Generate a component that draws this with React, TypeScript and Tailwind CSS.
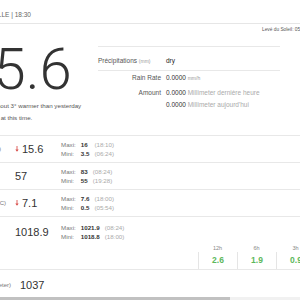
import type { ReactNode } from "react";

const sans = "font-['Liberation_Sans',Arial,sans-serif]";

function DownArrow() {
  return (
    <svg width="4" height="6" viewBox="0 0 4 6" className="shrink-0">
      <path d="M2 0 V5" stroke="#d9534f" strokeWidth="0.9" />
      <path d="M0.3 3.4 L2 5.8 L3.7 3.4 Z" fill="#d9534f" />
    </svg>
  );
}

interface MinMax {
  max: string;
  maxAt: string;
  min: string;
  minAt: string;
}

function MaxMini({ data }: { data: MinMax }) {
  return (
    <div className="grid w-max grid-cols-[auto_auto_auto] gap-x-[5px] text-[6.2px] leading-[9px]">
      <span className="text-[#777]">Maxi:</span>
      <span className="font-bold text-[#333]">{data.max}</span>
      <span className="text-[#aaa]">({data.maxAt})</span>
      <span className="text-[#777]">Mini:</span>
      <span className="font-bold text-[#333]">{data.min}</span>
      <span className="text-[#aaa]">({data.minAt})</span>
    </div>
  );
}

function Row({
  label,
  value,
  down,
  minmax,
  extra,
  tall,
}: {
  label: string;
  value: string;
  down?: boolean;
  minmax?: MinMax;
  extra?: ReactNode;
  tall?: boolean;
}) {
  return (
    <div
      className={`flex border-b border-[#e8e8e8] ${tall ? "h-[53px] items-start" : "h-[27px] items-center"}`}
    >
      <div className={`flex shrink-0 items-center ${tall ? "h-[30px]" : ""}`}>
        <div className="-ml-[45px] w-[61px] shrink-0 whitespace-nowrap text-[6px] text-[#777]">
          {label}
        </div>
        <div className="flex w-[46px] shrink-0 items-center gap-[3px] -ml-[1px]">
          {down && <DownArrow />}
          <span className="text-[11px] leading-none text-[#333]">{value}</span>
        </div>
        <div className="w-[137px] shrink-0">{minmax && <MaxMini data={minmax} />}</div>
      </div>
      {extra}
    </div>
  );
}

function Tendency() {
  const items = [
    { h: "12h", v: "2.6" },
    { h: "6h", v: "1.9" },
    { h: "3h", v: "0.9" },
  ];
  return (
    <div className="flex shrink-0 self-end">
      {items.map((it) => (
        <div key={it.h} className="w-[39px] shrink-0 text-center">
          <div className="text-[5.5px] leading-[8px] text-[#888]">{it.h}</div>
          <div className="h-[17px] border-l border-[#e5e5e5] text-[8.5px] leading-[17px] font-bold text-[#5cb85c]">
            {it.v}
          </div>
        </div>
      ))}
    </div>
  );
}

export default function App() {
  return (
    <div className={`flex h-[300px] w-[300px] flex-col overflow-hidden bg-white text-[#333] ${sans}`}>
      <div className="h-[24px] shrink-0 border-b border-[#e6e6e6] pt-[10px]">
        <div className="-ml-[100px] w-[131px] whitespace-nowrap text-right text-[6.5px] leading-[10px] text-[#666]">
          MÉTÉO ACTUELLE | 18:30
        </div>
      </div>

      <div className="flex h-[112px] shrink-0 border-b border-[#e8e8e8]">
        <div className="-ml-[65px] w-[163px] shrink-0 pt-[16px] text-center">
          <div className="font-['Roboto',Arial,sans-serif] text-[58px] font-light leading-none text-[#333]">
            15.6
          </div>
          <div className="mt-[2px] whitespace-nowrap text-[6.2px] leading-[12px] text-[#555]">
            Right now, it is about 3° warmer than yesterday
            <br />
            at this time.
          </div>
        </div>

        <div className="min-w-0 flex-1">
          <div className="h-[22px] whitespace-nowrap pl-[164px] pt-[2px] text-[4.8px] leading-[8px] text-[#555]">
            Levé du Soleil: 05:48
          </div>
          <div className="w-[182px]">
            <div className="flex h-[25px] items-center border-y border-[#e8e8e8] pt-[4px] text-[6.5px]">
              <div className="w-[68px] shrink-0 whitespace-nowrap text-[#555]">
                Précipitations <span className="text-[5px] text-[#999]">(mm)</span>
              </div>
              <div className="text-[#222]">dry</div>
            </div>
            <div className="grid grid-cols-[63px_1fr] gap-x-[5px] text-[6.5px]">
              <div className="text-right leading-[14px] text-[#555]">Rain Rate</div>
              <div className="whitespace-nowrap leading-[14px]">
                0.0000 <span className="text-[5px] text-[#999]">mm/h</span>
              </div>
              <div className="mt-[2px] text-right leading-[12px] text-[#555]">Amount</div>
              <div className="mt-[2px] whitespace-nowrap leading-[12px]">
                0.0000 <span className="text-[#aaa]">Millimeter dernière heure</span>
                <br />
                0.0000 <span className="text-[#aaa]">Millimeter aujourd'hui</span>
              </div>
            </div>
          </div>
        </div>
      </div>

      <Row
        label="Température (°C)"
        value="15.6"
        down
        minmax={{ max: "16", maxAt: "18:10", min: "3.5", minAt: "06:24" }}
      />
      <Row
        label="Humidité (%)"
        value="57"
        minmax={{ max: "83", maxAt: "08:24", min: "55", minAt: "19:28" }}
      />
      <Row
        label="Point de rosée (°C)"
        value="7.1"
        down
        minmax={{ max: "7.6", maxAt: "18:00", min: "0.5", minAt: "05:54" }}
      />
      <Row
        label="Pression (hPa)"
        value="1018.9"
        tall
        minmax={{ max: "1021.9", maxAt: "08:24", min: "1018.8", minAt: "18:00" }}
        extra={<Tendency />}
      />
      <div className="flex h-[27px] shrink-0 items-center pt-[3px]">
        <div className="-ml-[45px] w-[61px] shrink-0 whitespace-nowrap text-[6px] text-[#777]">
          Base nuages (meter)
        </div>
        <span className="pl-[4px] text-[11px] leading-none text-[#333]">1037</span>
      </div>

      <div className="flex h-[3px] shrink-0">
        <div className="w-[230px] bg-[#c1c1c1]" />
        <div className="flex-1 bg-[#f1f1f1]" />
      </div>
    </div>
  );
}
